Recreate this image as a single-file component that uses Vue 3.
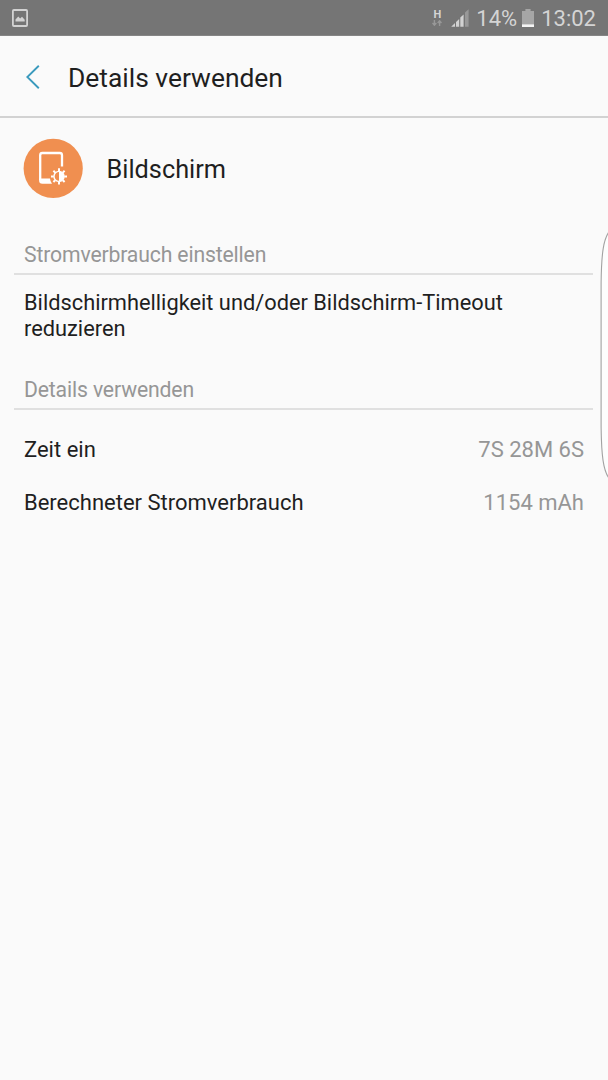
<script setup>
import { ref } from 'vue';

const battery = ref(14);
const time = ref('13:02');

const details = ref([
  { label: 'Zeit ein', value: '7S 28M 6S' },
  { label: 'Berechneter Stromverbrauch', value: '1154 mAh' },
]);
</script>

<template>
  <div class="screen">
    <div class="status-bar">
      <svg class="picture-icon" width="16" height="18" viewBox="0 0 16 18">
        <rect x="0.9" y="1" width="14.2" height="16" rx="1" fill="none" stroke="#d2d2d2" stroke-width="1.8" />
        <path d="M3.5 12.6V10.5L6.3 7.5L8.1 9.4L10 7.8L12.7 10.7V12.6Z" fill="#d2d2d2" />
      </svg>
      <div class="status-right">
        <div class="network">
          <span class="network-type">H</span>
          <svg width="10" height="6" viewBox="0 0 10 6">
            <path d="M2.4 0V5M0.5 3L2.4 5.2L4.3 3M7.6 6V1M5.7 3L7.6 0.8L9.5 3" fill="none" stroke="#989898" stroke-width="1.4" />
          </svg>
        </div>
        <svg class="signal" width="19" height="18" viewBox="0 0 19 18">
          <path d="M0.2 17.7L4 14V17.7Z" fill="#d2d2d2" />
          <path d="M5 17.7V13L8.2 10V17.7Z" fill="#d2d2d2" />
          <path d="M9.3 17.7V8.6L12.6 5.4V17.7Z" fill="#d2d2d2" />
          <path d="M14 17.7V3.6L17.6 0.2V17.7Z" fill="#989898" />
        </svg>
        <span class="battery-level">{{ battery }}%</span>
        <svg class="battery" width="12" height="18" viewBox="0 0 12 18">
          <path d="M0 18V2H3.4V0H8.6V2H12V18Z" fill="#a6a6a6" />
          <rect y="15.4" width="12" height="2.6" fill="#f4f4f4" />
        </svg>
        <span class="time">{{ time }}</span>
      </div>
    </div>

    <header class="header">
      <svg class="back" width="14" height="24" viewBox="0 0 14 24">
        <path d="M12.8 0.8L1.3 12L12.8 23.2" fill="none" stroke="#3a9abd" stroke-width="1.9" />
      </svg>
      <h1>Details verwenden</h1>
    </header>

    <div class="app">
      <svg class="app-icon" width="60" height="60" viewBox="0 0 60 60">
        <circle cx="30.2" cy="30.4" r="29.6" fill="#f08f50" />
        <path d="M39 28.5V17.2Q39 15 36.8 15H19.4Q17.2 15 17.2 17.2V42" fill="none" stroke="#fff" stroke-width="2.3" />
        <path d="M16.1 40.6H27Q27.2 43.6 29 45.8H19.4Q16.1 45.8 16.1 42.6Z" fill="#fff" />
        <circle cx="36" cy="38.4" r="5" fill="none" stroke="#fff" stroke-width="1.4" />
        <path d="M36 33.4A5 5 0 0 1 36 43.4Z" fill="#fff" />
        <path
          d="M36 33V30.2M36 43.8V46.6M30.8 38.4H28M41.2 38.4H44M32.2 34.6L30.4 32.8M39.8 34.6L41.6 32.8M32.2 42.2L30.4 44M39.8 42.2L41.6 44"
          stroke="#fff"
          stroke-width="2"
        />
      </svg>
      <span class="app-name">Bildschirm</span>
    </div>

    <h2>Stromverbrauch einstellen</h2>
    <p class="hint">Bildschirmhelligkeit und/oder Bildschirm-Timeout reduzieren</p>

    <h2>Details verwenden</h2>
    <div class="details">
      <div v-for="item in details" :key="item.label" class="row">
        <span>{{ item.label }}</span>
        <span class="value">{{ item.value }}</span>
      </div>
    </div>

    <!-- edge panel handle, lies over the content -->
    <svg class="edge-handle" width="8" height="248" viewBox="0 0 8 248">
      <path d="M8.5 1.5C3.5 9 1.5 22 1.1 52V196C1.5 226 3.5 239 8.5 246.5" fill="#fdfdfd" stroke="#a2a2a2" stroke-width="1.1" />
    </svg>
  </div>
</template>

<style>
body {
  background: #fafafa;
}
</style>

<style scoped>
.screen {
  position: relative;
  width: 608px;
  height: 1080px;
  overflow: hidden;
  background: #fafafa;
  color: #1f1f1f;
  font-family: Roboto, sans-serif;
  font-size: 22px;
}

.status-bar {
  display: flex;
  justify-content: space-between;
  align-items: flex-start;
  box-sizing: border-box;
  height: 36px;
  padding: 9px 12px 0;
  background: #757575;
  border-bottom: 1px solid #858585;
  color: #d4d4d4;
  line-height: 20px;
}

.status-right {
  display: flex;
}

.network {
  display: flex;
  flex-direction: column;
  align-items: center;
  width: 10px;
  margin-right: 9px;
}

.network-type {
  height: 11px;
  font-size: 11px;
  font-weight: 700;
  line-height: 11px;
}

.battery-level {
  margin-left: 6px;
}

.battery {
  margin-left: 5px;
}

.time {
  margin-left: 7px;
}

.header {
  display: flex;
  align-items: center;
  box-sizing: border-box;
  height: 82px;
  padding: 2px 26px 0;
  border-bottom: 2px solid #d2d2d2;
}

h1 {
  margin: 2px 0 0 28px;
  font-size: 26.4px;
  font-weight: 400;
}

.app {
  display: flex;
  align-items: center;
  height: 60px;
  padding: 20px 23px 0;
}

.app-name {
  margin: 3px 0 0 23.5px;
  font-size: 25.3px;
}

h2 {
  box-sizing: border-box;
  height: 35px;
  margin: 42px 15px 0 14px;
  padding-left: 10px;
  border-bottom: 2px solid #e0e0e0;
  color: #969696;
  font-size: 21.2px;
  font-weight: 400;
  line-height: 30px;
  letter-spacing: -0.15px;
}

.hint {
  margin: 15px 24px 0;
  font-size: 21.8px;
  line-height: 26px;
}

.hint + h2 {
  margin-top: 33px;
}

.details {
  padding: 13px 24px 0;
}

.row {
  display: flex;
  justify-content: space-between;
  height: 53px;
  line-height: 53px;
}

.value {
  color: #969696;
}

.edge-handle {
  position: absolute;
  top: 231px;
  right: 0;
}
</style>
